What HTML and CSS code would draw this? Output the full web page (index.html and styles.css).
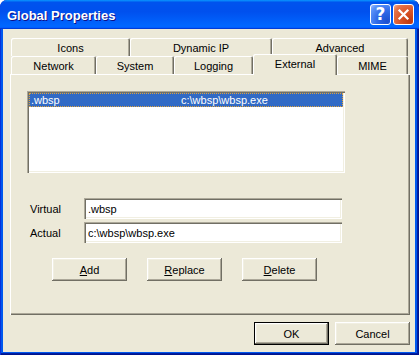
FILE: index.html
```html
<!DOCTYPE html>
<html>
<head>
    <title>Global Properties</title>
    <link rel="stylesheet" href="styles.css">
</head>
<body>
    <div class="window">
        <div class="title-bar">
            <span class="title-text">Global Properties</span>
            <div class="title-buttons">
                <span class="title-btn help-btn">?</span>
                <span class="title-btn close-btn">
                    <svg width="13" height="13" viewBox="0 0 13 13">
                        <path d="M2.5 2.5 L10.5 10.5 M10.5 2.5 L2.5 10.5" stroke="#fff" stroke-width="2.2" stroke-linecap="square"/>
                    </svg>
                </span>
            </div>
        </div>

        <div class="client">
            <div class="tabs">
                <div class="tab-row">
                    <div class="tab w-icons">Icons</div>
                    <div class="tab w-dynamic">Dynamic IP</div>
                    <div class="tab w-advanced">Advanced</div>
                </div>
                <div class="tab-row">
                    <div class="tab w-network">Network</div>
                    <div class="tab w-system">System</div>
                    <div class="tab w-logging">Logging</div>
                    <div class="tab w-external active">External</div>
                    <div class="tab w-mime">MIME</div>
                </div>
            </div>

            <div class="panel">
                <div class="listbox">
                    <div class="list-item selected">
                        <span class="col-virtual">.wbsp</span>
                        <span class="col-actual">c:\wbsp\wbsp.exe</span>
                    </div>
                </div>

                <div class="fields">
                    <div class="field-row">
                        <label class="field-label">Virtual</label>
                        <div class="text-input">.wbsp</div>
                    </div>
                    <div class="field-row">
                        <label class="field-label">Actual</label>
                        <div class="text-input">c:\wbsp\wbsp.exe</div>
                    </div>
                </div>

                <div class="panel-buttons">
                    <button class="btn"><u>A</u>dd</button>
                    <button class="btn"><u>R</u>eplace</button>
                    <button class="btn"><u>D</u>elete</button>
                </div>
            </div>

            <div class="dialog-buttons">
                <button class="btn default">OK</button>
                <button class="btn">Cancel</button>
            </div>
        </div>
    </div>
</body>
</html>
```

FILE: styles.css
```css
body {
    margin: 0;
    background-color: #fff;
    font-family: 'Liberation Sans', Arial, sans-serif;
    font-size: 11px;
    color: #000;
}

.window {
    width: 419px;
    height: 355px;
    box-sizing: border-box;
    display: flex;
    flex-direction: column;
    background-color: #0058ee;
    border-radius: 7px 7px 0 0;
    box-shadow: inset 1px 0 #0831d9, inset -1px -1px #00138c, inset -2px -2px #001ea0;
    overflow: hidden;
}

/* title bar */
.title-bar {
    height: 29px;
    flex: none;
    display: flex;
    align-items: center;
    justify-content: space-between;
    padding: 0 5px 0 7px;
    background: linear-gradient(180deg, #0997ff, #0053ee 8%, #0050ee 40%, #0066ff 88%, #0066ff 93%, #005bff 95%, #003dd7 96%, #003dd7);
    border-radius: 7px 7px 0 0;
}

.title-text {
    color: #fff;
    font-weight: bold;
    font-size: 13px;
    text-shadow: 1px 1px #0f1089;
    padding-top: 1px;
}

.title-buttons {
    display: flex;
    gap: 2px;
}

.title-btn {
    width: 21px;
    height: 21px;
    box-sizing: border-box;
    border: 1px solid #fff;
    border-radius: 3px;
    display: flex;
    align-items: center;
    justify-content: center;
    color: #fff;
}

.help-btn {
    background: radial-gradient(circle at 85% 85%, #1c4fd0 0%, #2f6ae8 45%, #5a92f8 80%, #9cc0ff 100%);
    font-family: 'DejaVu Sans', sans-serif;
    font-weight: bold;
    font-size: 17px;
    line-height: 1;
}

.close-btn {
    background: radial-gradient(circle at 85% 85%, #c0390f 0%, #da5427 45%, #e6754c 80%, #f4ae92 100%);
}

/* client area */
.client {
    flex: 1;
    margin: 0 4px 3px 3px;
    background-color: #ece9d8;
    display: flex;
    flex-direction: column;
    padding: 9px 5px 0 7px;
}

.tabs {
    padding-left: 1px;
    position: relative;
    z-index: 1;
}

.tab-row {
    display: flex;
    height: 18px;
    align-items: flex-start;
}

.tab {
    height: 18px;
    box-sizing: border-box;
    display: flex;
    align-items: center;
    justify-content: center;
    background-color: #ece9d8;
    border-radius: 2px 2px 0 0;
    box-shadow: inset 1px 1px #fff, inset -1px 0 #716f64, inset -2px 0 #aca899;
    padding-top: 1px;
}

.tab.active {
    height: 21px;
    margin-top: -2px;
    padding-bottom: 3px;
    position: relative;
    z-index: 2;
}

.w-icons { width: 119px; }
.w-dynamic { width: 142px; }
.w-advanced { width: 136px; }
.w-network { width: 85px; }
.w-system { width: 78px; }
.w-logging { width: 79px; }
.w-external { width: 84px; }
.w-mime { width: 71px; }

/* tab page */
.panel {
    width: 400px;
    height: 241px;
    box-sizing: border-box;
    box-shadow: inset 1px 1px #fff, inset -1px -1px #716f64, inset -2px -2px #aca899;
    padding-top: 17px;
}

.listbox {
    width: 318px;
    height: 82px;
    margin-left: 17px;
    box-sizing: border-box;
    background-color: #fff;
    padding: 2px 2px;
    box-shadow: inset 1px 1px #aca899, inset 2px 2px #716f64, inset -1px -1px #fff, inset -2px -2px #f1efe2;
}

.list-item {
    display: flex;
    height: 14px;
    align-items: center;
    box-sizing: border-box;
}

.list-item.selected {
    background-color: #316ac5;
    color: #fff;
    border: 1px dotted #e0a33c;
}

.col-virtual {
    width: 150px;
    padding-left: 1px;
}

.fields {
    margin-top: 25px;
    display: flex;
    flex-direction: column;
    gap: 3px;
}

.field-row {
    display: flex;
    align-items: center;
}

.field-label {
    width: 54px;
    margin-left: 20px;
}

.text-input {
    width: 258px;
    height: 21px;
    box-sizing: border-box;
    background-color: #fff;
    padding: 0 4px;
    display: flex;
    align-items: center;
    box-shadow: inset 1px 1px #aca899, inset 2px 2px #716f64, inset -1px -1px #fff, inset -2px -2px #f1efe2;
}

.panel-buttons {
    display: flex;
    gap: 20px;
    margin: 15px 0 0 42px;
}

/* buttons */
.btn {
    width: 75px;
    height: 23px;
    box-sizing: border-box;
    padding: 0;
    border: none;
    background-color: #ece9d8;
    font-family: 'Liberation Sans', Arial, sans-serif;
    font-size: 11px;
    color: #000;
    box-shadow: inset -1px -1px #716f64, inset 1px 1px #fff, inset -2px -2px #aca899, inset 2px 2px #f1efe2;
}

.btn.default {
    border: 1px solid #000;
}

.dialog-buttons {
    display: flex;
    justify-content: flex-end;
    gap: 6px;
    margin-top: 7px;
}
```
